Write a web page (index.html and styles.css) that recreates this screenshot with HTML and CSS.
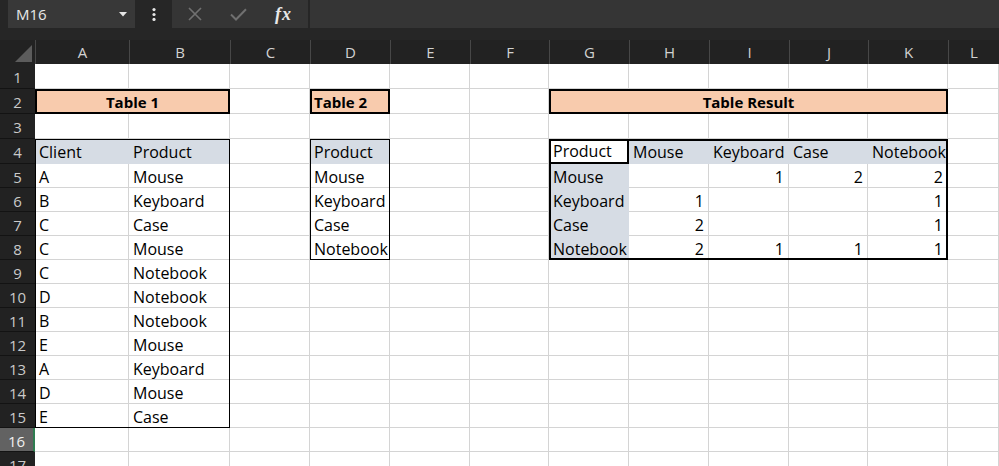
FILE: index.html
```html
<!DOCTYPE html>
<html>
<head>
<meta charset="utf-8">
<title>Sheet</title>
<link rel="stylesheet" href="styles.css">
</head>
<body>
<div class="app">
  <div class="fbar">
    <div class="namebox">
      <span class="name">M16</span>
      <svg class="dd" width="8" height="5" viewBox="0 0 8 5"><path d="M0 0H8L4 4.5Z" fill="#e6e6e6"/></svg>
    </div>
    <div class="grip">
      <svg width="4" height="13" viewBox="0 0 4 13"><circle cx="2" cy="1.6" r="1.6" fill="#e6e6e6"/><circle cx="2" cy="6.5" r="1.6" fill="#e6e6e6"/><circle cx="2" cy="11.4" r="1.6" fill="#e6e6e6"/></svg>
    </div>
    <div class="fbtns">
      <svg width="14" height="14" viewBox="0 0 14 14"><path d="M1 1L13 13M13 1L1 13" stroke="#707070" stroke-width="1.7" fill="none"/></svg>
      <svg width="17" height="13" viewBox="0 0 17 13"><path d="M1 6.5L6 11.5L16 1.2" stroke="#707070" stroke-width="2" fill="none"/></svg>
      <span class="fx">fx</span>
    </div>
    <div class="finput"></div>
  </div>
  <div class="sheet">
    <div class="corner"><svg width="17" height="17" viewBox="0 0 17 17"><path d="M17 0V17H0Z" fill="#5c5c5c"/></svg></div>
    <div class="colheads">
      <div>A</div><div>B</div><div>C</div><div>D</div><div>E</div><div>F</div>
      <div>G</div><div>H</div><div>I</div><div>J</div><div>K</div><div>L</div>
    </div>
    <div class="rowheads">
      <div>1</div><div>2</div><div>3</div><div>4</div><div>5</div><div>6</div>
      <div>7</div><div>8</div><div>9</div><div>10</div><div>11</div><div>12</div>
      <div>13</div><div>14</div><div>15</div><div class="cur">16</div><div>17</div>
    </div>
    <div class="cells">
      <div class="layer gridcols">
        <i></i><i></i><i></i><i></i><i></i><i></i><i></i><i></i><i></i><i></i><i></i><i></i>
      </div>
      <div class="layer gridrows">
        <i></i><i></i><i></i><i></i><i></i><i></i><i></i><i></i><i></i><i></i><i></i><i></i><i></i><i></i><i></i><i></i><i></i>
      </div>
      <div class="layer content">
        <div class="title t1-title">Table 1</div>
        <div class="title t2-title">Table 2</div>
        <div class="title tr-title">Table Result</div>

        <div class="tbl t1">
          <span class="hd">Client</span><span class="hd">Product</span>
          <span>A</span><span>Mouse</span>
          <span>B</span><span>Keyboard</span>
          <span>C</span><span>Case</span>
          <span>C</span><span>Mouse</span>
          <span>C</span><span>Notebook</span>
          <span>D</span><span>Notebook</span>
          <span>B</span><span>Notebook</span>
          <span>E</span><span>Mouse</span>
          <span>A</span><span>Keyboard</span>
          <span>D</span><span>Mouse</span>
          <span>E</span><span>Case</span>
        </div>

        <div class="tbl t2">
          <span class="hd">Product</span>
          <span>Mouse</span>
          <span>Keyboard</span>
          <span>Case</span>
          <span>Notebook</span>
        </div>

        <div class="tbl tr">
          <span class="sel">Product</span><span class="hd">Mouse</span><span class="hd">Keyboard</span><span class="hd">Case</span><span class="hd">Notebook</span>
          <span class="hd">Mouse</span><span class="num"></span><span class="num">1</span><span class="num">2</span><span class="num">2</span>
          <span class="hd">Keyboard</span><span class="num">1</span><span class="num"></span><span class="num"></span><span class="num">1</span>
          <span class="hd">Case</span><span class="num">2</span><span class="num"></span><span class="num"></span><span class="num">1</span>
          <span class="hd">Notebook</span><span class="num">2</span><span class="num">1</span><span class="num">1</span><span class="num">1</span>
        </div>
      </div>
    </div>
  </div>
</div>
</body>
</html>
```

FILE: styles.css
```css
:root {
  --cols: 94px 101px 80px 80px 80px 79px 80px 80px 80px 79px 80px 1fr;
  --rows: 25px 25px 25px 25px repeat(13, 24px);
}
* { box-sizing: border-box; }
html, body {
  margin: 0;
  height: 100%;
  overflow: hidden;
  background: #262626;
}
body {
  font-family: "Open Sans", "Noto Sans", sans-serif;
}
.app {
  width: 999px;
  height: 466px;
  overflow: hidden;
  display: flex;
  flex-direction: column;
}

/* formula bar */
.fbar {
  height: 28px;
  flex: none;
  display: flex;
  margin-bottom: 12px;
}
.namebox {
  margin-left: 8px;
  width: 127px;
  background: #383838;
  display: flex;
  align-items: center;
  justify-content: space-between;
  padding: 0 8px 0 8px;
  color: #e8e8e8;
  font-size: 15px;
}
.name { line-height: 28px; }
.grip {
  width: 37px;
  display: flex;
  align-items: center;
  justify-content: center;
}
.fbtns {
  width: 136px;
  background: #353535;
  display: flex;
  align-items: center;
  gap: 28px;
  padding-left: 16px;
}
.fx {
  font-family: "Liberation Serif", serif;
  font-style: italic;
  font-weight: 700;
  font-size: 18px;
  color: #e8e8e8;
  letter-spacing: 1px;
  line-height: 28px;
}
.finput {
  flex: 1;
  margin-left: 2px;
  background: #353535;
}

/* sheet */
.sheet {
  flex: 1;
  min-height: 0;
  display: grid;
  grid-template-columns: 35px 1fr;
  grid-template-rows: 24px 1fr;
}
.corner {
  background: #222;
  display: flex;
  align-items: flex-end;
  justify-content: flex-end;
  padding: 0 3px 2px 0;
}
.colheads {
  display: grid;
  grid-template-columns: var(--cols);
  background: #222;
}
.colheads div {
  border-left: 1px solid #474747;
  text-align: center;
  color: #d2d2d2;
  font-size: 15px;
  line-height: 24px;
}
.rowheads {
  display: grid;
  grid-template-rows: var(--rows);
  background: #222;
  overflow: hidden;
}
.rowheads div {
  border-bottom: 1px solid #131313;
  text-align: center;
  color: #cacaca;
  font-size: 15px;
  line-height: 24px;
  padding-top: 1px;
}
.rowheads .cur {
  background: #626262;
  color: #f0f0f0;
  border-right: 2px solid #2e7d50;
}
.cells {
  display: grid;
  background: #fff;
  overflow: hidden;
}
.layer {
  grid-area: 1 / 1;
  display: grid;
}
.gridcols {
  grid-template-columns: var(--cols);
}
.gridcols i {
  border-right: 1px solid #d4d4d4;
}
.gridrows {
  grid-template-rows: var(--rows);
  align-content: start;
}
.gridrows i {
  border-bottom: 1px solid #d4d4d4;
}
.content {
  grid-template-columns: var(--cols);
  grid-template-rows: var(--rows);
  align-content: start;
  color: #000;
  font-size: 16px;
}

/* titles */
.title {
  grid-row: 2;
  background: #f8cbad;
  outline: 2px solid #000;
  outline-offset: -2px;
  font-weight: 700;
  font-size: 15px;
  line-height: 24px;
  padding: 1px 4px 0;
  white-space: nowrap;
}
.t1-title { grid-column: 1 / 3; text-align: center; }
.t2-title { grid-column: 4; }
.tr-title { grid-column: 7 / 12; text-align: center; }

/* tables */
.tbl {
  display: grid;
  outline: 1px solid #000;
  outline-offset: -1px;
}
.t1 {
  grid-column: 1 / 3;
  grid-row: 4 / 16;
  grid-template-columns: 94px 101px;
  grid-template-rows: 25px repeat(11, 24px);
}
.t2 {
  grid-column: 4;
  grid-row: 4 / 9;
  grid-template-rows: 25px repeat(4, 24px);
}
.tr {
  grid-column: 7 / 12;
  grid-row: 4 / 9;
  grid-template-columns: 80px 80px 80px 79px 80px;
  grid-template-rows: 25px repeat(4, 24px);
  outline-width: 2px;
  outline-offset: -2px;
}
.tbl span {
  padding: 1px 2px 0 4px;
  line-height: 24px;
  white-space: nowrap;
  overflow: hidden;
}
.tbl .hd { background: #d6dce4; }
.tbl .num { text-align: right; padding-right: 5px; }
.tbl .sel {
  background: #fff;
  border: 2px solid #000;
  padding: 0 2px;
  line-height: 21px;
}
```
